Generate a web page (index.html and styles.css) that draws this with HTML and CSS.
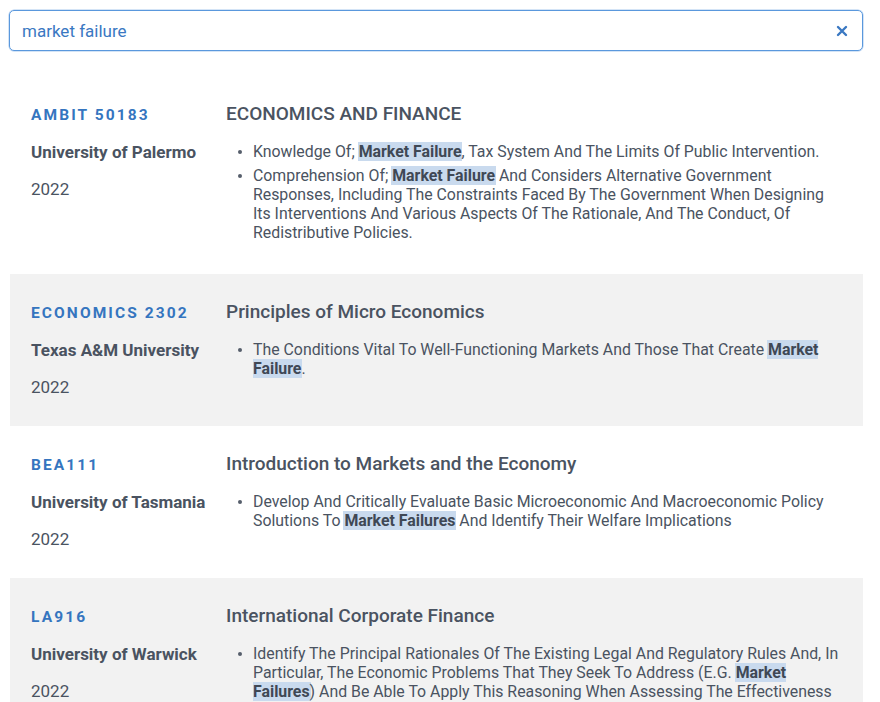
FILE: index.html
```html
<!DOCTYPE html>
<html lang="en">
<head>
<meta charset="utf-8">
<title>Search results</title>
<link rel="stylesheet" href="styles.css">
</head>
<body>
<div class="page">
  <div class="search">
    <span class="search-text">market failure</span>
    <span class="search-clear">
      <svg width="12" height="12" viewBox="0 0 12 12"><path d="M2 2 L10 10 M10 2 L2 10" stroke="#3a78c2" stroke-width="2.4" stroke-linecap="round"/></svg>
    </span>
  </div>

  <div class="results">
    <div class="card">
      <div class="meta">
        <div class="code">AMBIT 50183</div>
        <div class="uni">University of Palermo</div>
        <div class="year">2022</div>
      </div>
      <div class="body">
        <div class="title">ECONOMICS AND FINANCE</div>
        <ul class="points">
          <li>Knowledge Of; <mark>Market Failure</mark>, Tax System And The Limits Of Public Intervention.</li>
          <li>Comprehension Of; <mark>Market Failure</mark> And Considers Alternative Government Responses, Including The Constraints Faced By The Government When Designing Its Interventions And Various Aspects Of The Rationale, And The Conduct, Of Redistributive Policies.</li>
        </ul>
      </div>
    </div>

    <div class="card alt">
      <div class="meta">
        <div class="code">ECONOMICS 2302</div>
        <div class="uni">Texas A&amp;M University</div>
        <div class="year">2022</div>
      </div>
      <div class="body">
        <div class="title">Principles of Micro Economics</div>
        <ul class="points">
          <li>The Conditions Vital To Well-Functioning Markets And Those That Create <mark>Market Failure</mark>.</li>
        </ul>
      </div>
    </div>

    <div class="card">
      <div class="meta">
        <div class="code">BEA111</div>
        <div class="uni">University of Tasmania</div>
        <div class="year">2022</div>
      </div>
      <div class="body">
        <div class="title">Introduction to Markets and the Economy</div>
        <ul class="points">
          <li>Develop And Critically Evaluate Basic Microeconomic And Macroeconomic Policy Solutions To <mark>Market Failures</mark> And Identify Their Welfare Implications</li>
        </ul>
      </div>
    </div>

    <div class="card alt">
      <div class="meta">
        <div class="code">LA916</div>
        <div class="uni">University of Warwick</div>
        <div class="year">2022</div>
      </div>
      <div class="body">
        <div class="title">International Corporate Finance</div>
        <ul class="points">
          <li>Identify The Principal Rationales Of The Existing Legal And Regulatory Rules And, In Particular, The Economic Problems That They Seek To Address (E.G. <mark>Market Failures</mark>) And Be Able To Apply This Reasoning When Assessing The Effectiveness Of The Regulatory Framework.</li>
        </ul>
      </div>
    </div>
  </div>
</div>
</body>
</html>
```

FILE: styles.css
```css
html, body {
  margin: 0;
  padding: 0;
  background: #ffffff;
  overflow: hidden;
}

body {
  font-family: Roboto, "Liberation Sans", Arial, sans-serif;
  color: #4a5361;
}

.page {
  padding: 10px 17px 0 9px;
}

.search {
  height: 41px;
  box-sizing: border-box;
  border: 1.5px solid #5a98dd;
  border-radius: 5px;
  display: flex;
  align-items: center;
  justify-content: space-between;
  padding: 0 14px 0 12px;
  box-shadow: 0 0 0 0.5px #a9c9ee;
}

.search-text {
  font-size: 17px;
  color: #3a78c2;
}

.search-clear {
  display: flex;
  align-items: center;
}

.results {
  margin-top: 25px;
  margin-left: 1px;
}

.card {
  display: flex;
  padding: 27px 21px 27px 21px;
  background: #ffffff;
}

.card.alt {
  background: #f2f2f2;
}

.meta {
  width: 195px;
  flex: none;
  display: flex;
  flex-direction: column;
  gap: 13px;
}

.code {
  font-size: 15.5px;
  line-height: 24px;
  font-weight: 700;
  letter-spacing: 2.1px;
  color: #3575bf;
}

.uni {
  font-size: 17px;
  line-height: 24px;
  font-weight: 700;
  color: #4a5361;
}

.year {
  font-size: 17px;
  line-height: 24px;
  color: #4a5361;
}

.body {
  flex: 1;
  min-width: 0;
}

.title {
  font-size: 19px;
  line-height: 24px;
  font-weight: 500;
  color: #4a5361;
  margin-top: -1px;
}

.points {
  list-style: none;
  margin: 16px 0 5px 0;
  padding-left: 27px;
  font-size: 15.86px;
  line-height: 19px;
  color: #4a5361;
}

.points li::before {
  content: "";
  display: inline-block;
  width: 4px;
  height: 4px;
  border-radius: 50%;
  background: #565e6b;
  margin-left: -15px;
  margin-right: 11px;
  vertical-align: 3px;
}

.points li + li {
  margin-top: 5px;
}

.points mark {
  background: #c9daee;
  color: #3f4855;
  font-weight: 700;
  box-shadow: -1px 0 0 #c9daee, 1px 0 0 #c9daee;
}
```
